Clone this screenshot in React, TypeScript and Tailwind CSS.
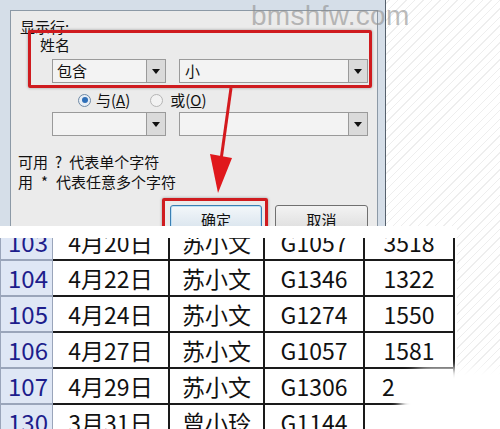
const rows = [
  { no: '103', date: '4月20日', name: '苏小文', code: 'G1057', qty: '3518' },
  { no: '104', date: '4月22日', name: '苏小文', code: 'G1346', qty: '1322' },
  { no: '105', date: '4月24日', name: '苏小文', code: 'G1274', qty: '1550' },
  { no: '106', date: '4月27日', name: '苏小文', code: 'G1057', qty: '1581' },
  { no: '107', date: '4月29日', name: '苏小文', code: 'G1306', qty: '2' },
  { no: '130', date: '3月31日', name: '曾小玲', code: 'G1144', qty: '' },
];

function Combo({ width }: { width: string }) {
  return (
    <div className={`flex h-[24px] ${width} border border-[#9a9a9a] bg-[#f3f3f3]`}>
      <div className="flex-1" />
      <div className="flex w-[19px] items-center justify-center border-l border-[#9a9a9a] bg-[#dadada]">
        <div className="h-0 w-0 border-x-[4px] border-t-[5px] border-x-transparent border-t-[#111]" />
      </div>
    </div>
  );
}

function Dialog() {
  return (
    <div className="relative h-[226px] w-[386px] shrink-0 overflow-hidden border-r border-[#56616d] bg-[#d5dee8] pl-[10px] pr-[7px] pt-[10px]">
      <div className="h-full border-x border-t border-[#8c99a6] bg-[#ebebeb] text-[15px] leading-[18px] text-[#111]">
        <p className="pl-[9px] pt-[7px]">显示行:</p>
        <p className="pl-[29px]">姓名</p>
        <div className="mt-[5px] flex gap-[13px] pl-[41px]">
          <div className="relative">
            <Combo width="w-[114px]" />
            <span className="absolute left-[5px] top-[3px]">包含</span>
          </div>
          <div className="relative">
            <Combo width="w-[189px]" />
            <span className="absolute left-[6px] top-[3px]">小</span>
          </div>
        </div>
        <div className="mt-[9px] flex h-[16px] items-center pl-[67px]">
          <span className="flex h-[13px] w-[13px] items-center justify-center rounded-full border border-[#6f8aa6] bg-[#e8eef5]">
            <span className="h-[6px] w-[6px] rounded-full bg-[#2f6fb8]" />
          </span>
          <span className="ml-[5px]">
            与(<span className="underline">A</span>)
          </span>
          <span className="ml-[20px] h-[13px] w-[13px] rounded-full border border-[#b5b5b5] bg-[#f2f2f2]" />
          <span className="ml-[7px]">
            或(<span className="underline">O</span>)
          </span>
        </div>
        <div className="mt-[4px] flex gap-[13px] pl-[41px]">
          <Combo width="w-[114px]" />
          <Combo width="w-[189px]" />
        </div>
        <div className="mt-[16px] pl-[7px] leading-[20px]">
          <p>
            可用<span className="mx-[7px]">?</span>代表单个字符
          </p>
          <p>
            用<span className="mx-[8px]">*</span>代表任意多个字符
          </p>
        </div>
        <div className="mt-[13px] flex pl-[159px]">
          <button className="h-[28px] w-[92px] rounded-[3px] border border-[#3b7fb3] bg-gradient-to-b from-[#f3f7fa] to-[#d6e2ec] pt-[2px] text-[15px] shadow-[inset_0_0_0_1px_#bfe0f5]">
            确定
          </button>
          <button className="ml-[13px] h-[28px] w-[93px] rounded-[3px] border border-[#707070] bg-gradient-to-b from-[#f3f3f3] to-[#dcdcdc] pt-[2px] text-[15px]">
            取消
          </button>
        </div>
      </div>

      <div className="absolute left-[28px] top-[30px] h-[58px] w-[344px] rounded-[2px] border-[3px] border-[#cf1b1f] shadow-[0_0_3px_rgba(0,0,0,0.35)]" />
      <div className="absolute left-[162px] top-[198px] h-[40px] w-[106px] rounded-[2px] border-[3px] border-[#cf1b1f] shadow-[0_0_3px_rgba(0,0,0,0.35)]" />
      <svg className="absolute left-0 top-0" width="386" height="226" viewBox="0 0 386 226">
        <line x1="231" y1="88" x2="221" y2="160" stroke="#d41a1e" strokeWidth="3" />
        <polygon points="210,154 232,158 218,193" fill="#e0181c" />
      </svg>
    </div>
  );
}

function Table() {
  return (
    <div className="min-h-0 w-[457px] flex-1 bg-white pt-[12px]">
      <div className="h-full overflow-hidden">
        <div className="-mt-[13px] text-[23px] leading-none text-[#111]">
          {rows.map((r) => (
            <div key={r.no} className="grid h-[36px] grid-cols-[53px_117px_95px_100px_90px]">
              <div className="flex items-center justify-center border-b-2 border-l border-r border-[#9aa5ba] bg-[#dfe7f5] pl-[3px] text-[24px] text-[#1d1d8c]">
                {r.no}
              </div>
              <div className="flex items-center justify-center border-b-2 border-r-2 border-[#1a1a1a]">{r.date}</div>
              <div className="flex items-center justify-center border-b-2 border-r-2 border-[#1a1a1a]">{r.name}</div>
              <div className="flex items-center justify-center border-b-2 border-r-2 border-[#1a1a1a]">{r.code}</div>
              <div className={`flex items-center border-b-2 border-r-2 border-[#1a1a1a] ${r.qty.length > 1 ? 'justify-center' : 'pl-[17px]'}`}>
                {r.qty}
              </div>
            </div>
          ))}
        </div>
      </div>
    </div>
  );
}

export default function App() {
  return (
    <div className="relative flex h-[429px] w-[500px] flex-col overflow-hidden bg-[repeating-linear-gradient(135deg,#ffffff_0px,#ffffff_5px,#eeeeee_5px,#eeeeee_6px)] font-['Noto_Sans_CJK_SC','Liberation_Sans',sans-serif]">
      <Dialog />
      <Table />

      <span className="absolute left-[251px] top-[0px] font-['Liberation_Sans',sans-serif] text-[28px] leading-[32px] tracking-[0.3px] text-[#8f8f8f]/60">
        bmshfw.com
      </span>
      <div className="absolute left-[400px] top-[368px] h-[80px] w-[130px] rounded-[30px] bg-white blur-[5px]" />
    </div>
  );
}
